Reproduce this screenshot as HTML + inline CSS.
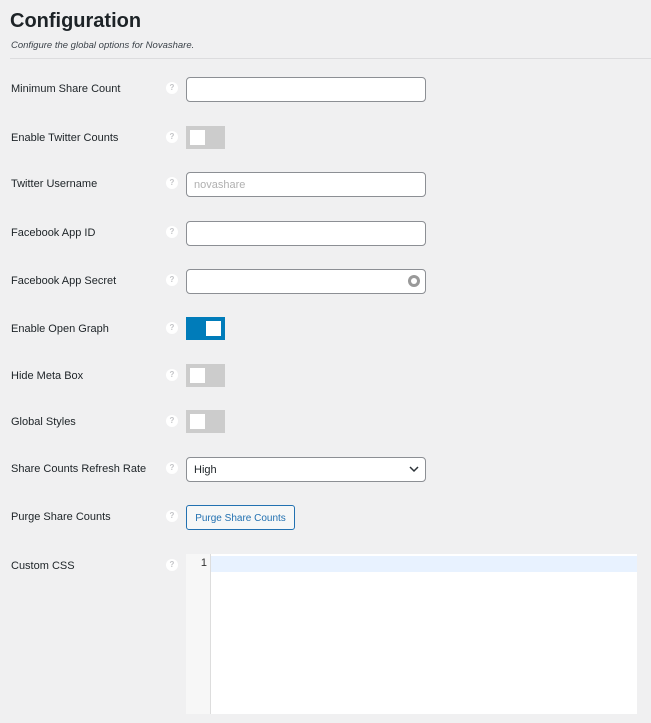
<!DOCTYPE html>
<html><head><style>
body{margin:0;width:651px;height:723px;background:#f0f0f1;font-family:"Liberation Sans",sans-serif;color:#1d2327;position:relative;overflow:hidden}
.a{position:absolute}
h1{position:absolute;left:10px;top:10px;margin:0;font-size:20px;font-weight:600;color:#1d2327}
.sub{left:11px;top:40px;font-size:9.5px;font-style:italic;color:#3c434a}
.sep{left:10px;top:58px;width:641px;height:1px;background:#dcdcde}
.lbl{left:11px;font-size:11px;color:#1d2327;margin-top:1px}
.q{left:166px;width:12px;height:12px;border-radius:50%;background:#fff;color:#c3c4c7;font-size:8px;text-align:center;line-height:12px;font-weight:bold}
.in{left:186px;width:238px;height:23px;background:#fff;border:1px solid #8c8f94;border-radius:4px}
.tg{left:186px;width:39px;height:23px;background:#ccc}
.tg i{position:absolute;left:4px;top:4px;width:15px;height:15px;background:#fff}
.tg.on{background:#007cba}.tg.on i{left:20px}
</style></head><body>
<h1>Configuration</h1>
<div class="a sub">Configure the global options for Novashare.</div>
<div class="a sep"></div>

<div class="a lbl" style="top:82px">Minimum Share Count</div><div class="a q" style="top:82px">?</div><div class="a in" style="top:77px"></div>
<div class="a lbl" style="top:131px">Enable Twitter Counts</div><div class="a q" style="top:131px">?</div><div class="a tg" style="top:126px"><i></i></div>
<div class="a lbl" style="top:177px">Twitter Username</div><div class="a q" style="top:177px">?</div><div class="a in" style="top:172px"><span style="position:absolute;left:7px;top:6px;font-size:11px;color:#b0b0b0">novashare</span></div>
<div class="a lbl" style="top:226px">Facebook App ID</div><div class="a q" style="top:226px">?</div><div class="a in" style="top:221px"></div>
<div class="a lbl" style="top:274px">Facebook App Secret</div><div class="a q" style="top:274px">?</div><div class="a in" style="top:269px"><span style="position:absolute;right:5px;top:5px;width:12px;height:12px;border-radius:50%;background:#999"><span style="position:absolute;left:3px;top:3px;width:6px;height:6px;border-radius:50%;background:#fff"></span></span></div>
<div class="a lbl" style="top:322px">Enable Open Graph</div><div class="a q" style="top:322px">?</div><div class="a tg on" style="top:317px"><i></i></div>
<div class="a lbl" style="top:369px">Hide Meta Box</div><div class="a q" style="top:369px">?</div><div class="a tg" style="top:364px"><i></i></div>
<div class="a lbl" style="top:415px">Global Styles</div><div class="a q" style="top:415px">?</div><div class="a tg" style="top:410px"><i></i></div>
<div class="a lbl" style="top:462px">Share Counts Refresh Rate</div><div class="a q" style="top:462px">?</div><div class="a in" style="top:457px"><span style="position:absolute;left:7px;top:6px;font-size:11px">High</span><svg style="position:absolute;right:6px;top:7px" width="10" height="8" viewBox="0 0 10 8"><path d="M1 2l4 4 4-4" fill="none" stroke="#2c3338" stroke-width="1.5"/></svg></div>
<div class="a lbl" style="top:510px">Purge Share Counts</div><div class="a q" style="top:510px">?</div>
<div class="a" style="left:186px;top:505px;width:107px;height:23px;border:1px solid #2271b1;border-radius:3px;background:#f6f7f7;color:#2271b1;font-size:10px;line-height:25px;text-align:center">Purge Share Counts</div>
<div class="a lbl" style="top:559px">Custom CSS</div><div class="a q" style="top:559px">?</div>
<div class="a" style="left:186px;top:554px;width:451px;height:160px;background:#fff"></div>
<div class="a" style="left:186px;top:554px;width:24px;height:160px;background:#f7f7f7;border-right:1px solid #ddd"></div>
<div class="a" style="left:211px;top:556px;width:426px;height:16px;background:#e8f2ff"></div>
<div class="a" style="left:186px;top:557px;width:21px;text-align:right;font-size:11px;color:#333">1</div>
</body></html>
